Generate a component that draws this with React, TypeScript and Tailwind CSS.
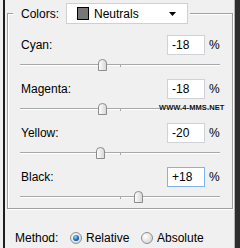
import React from "react";

const rows = [
  { label: "Cyan:", value: -18 },
  { label: "Magenta:", value: -18, mark: true },
  { label: "Yellow:", value: -20 },
  { label: "Black:", value: 18, focused: true },
];

const fmt = (v: number) => (v > 0 ? `+${v}` : `${v}`);

const Thumb = () => (
  <svg width="9" height="12" viewBox="0 0 9 12">
    <defs>
      <linearGradient id="thumbFill" x1="0" x2="1" y1="0" y2="0">
        <stop offset="0" stopColor="#ffffff" />
        <stop offset="1" stopColor="#d6d6d6" />
      </linearGradient>
    </defs>
    <path
      d="M0.5 11.5 V4 Q0.5 0.5 4.5 0.5 Q8.5 0.5 8.5 4 V11.5 Z"
      fill="url(#thumbFill)"
      stroke="#8c8c8c"
    />
  </svg>
);

const Radio = ({ checked }: { checked?: boolean }) => (
  <svg width="12" height="12" viewBox="0 0 12 12">
    <defs>
      <radialGradient id="radioBg" cx="0.35" cy="0.35" r="0.8">
        <stop offset="0" stopColor="#ffffff" />
        <stop offset="1" stopColor="#cfcfcf" />
      </radialGradient>
      <radialGradient id="radioDot" cx="0.4" cy="0.35" r="0.7">
        <stop offset="0" stopColor="#a6dcff" />
        <stop offset="0.5" stopColor="#2a87d6" />
        <stop offset="1" stopColor="#0d3f86" />
      </radialGradient>
    </defs>
    <circle cx="6" cy="6" r="5.5" fill="url(#radioBg)" stroke="#8e8f8f" />
    {checked && <circle cx="6" cy="6" r="3" fill="url(#radioDot)" />}
  </svg>
);

export default function App() {
  return (
    <div className="flex h-[248px] w-[240px] bg-[#f0f0f0] text-[12px] text-black font-['Liberation_Sans',Arial,sans-serif]">
      {/* left edge */}
      <div className="w-[3px]" />
      <div className="w-[2px] bg-[#1e1e1e]" />

      <div className="flex w-[229px] flex-col">
        <fieldset className="ml-[2px] mt-[3px] w-[226px] border border-[#a0a0a0] pb-[1px] pt-[11px] shadow-[inset_1px_1px_0_#fff,1px_1px_0_#fff]">
          <legend className="ml-[5px] flex items-center bg-[#f0f0f0] pl-[8px] pr-[2px]">
            <span className="w-[45px]">Colors:</span>
            <div className="flex h-[21px] w-[122px] items-center border border-[#d0d0d0] bg-white pl-[10px]">
              <span className="h-[13px] w-[12px] border border-black bg-[#777777]" />
              <span className="ml-[5px] flex-1 text-[12px]">Neutrals</span>
              <svg width="7" height="4" viewBox="0 0 7 4" className="mr-[11px]">
                <path d="M0 0 H7 L3.5 4 Z" fill="#000" />
              </svg>
            </div>
          </legend>

          <div className="flex flex-col gap-[4px]">
            {rows.map((r) => (
              <div key={r.label} className="flex flex-col">
                <div className="flex h-[20px] items-center">
                  <span className="ml-[13px] w-[146px]">{r.label}</span>
                  <div
                    className={`flex h-[20px] w-[38px] items-center border bg-white pl-[4px] ${
                      r.focused ? "border-[#7eb4ea]" : "border-[#cfd3d8]"
                    }`}
                  >
                    {fmt(r.value)}
                  </div>
                  <span className="ml-[4px]">%</span>
                </div>
                <div className="relative ml-[12px] h-[20px] w-[200px]">
                  <div className="absolute left-0 top-[9px] h-[2px] w-[200px] border-t border-[#a8a8a8] bg-white" />
                  <div className="absolute left-[100px] top-[9px] h-[3px] w-[1px] bg-[#a8a8a8]" />
                  <div className="absolute top-[4px]" style={{ left: 96 + r.value }}>
                    <Thumb />
                  </div>
                  {r.mark && (
                    <span className="absolute left-[139px] top-[5px] whitespace-nowrap text-[7.5px] font-bold leading-[8px] tracking-[0.1px] text-[#111] [text-shadow:0_0_1px_#fff]">
                      WWW.4-MMS.NET
                    </span>
                  )}
                </div>
              </div>
            ))}
          </div>
        </fieldset>

        <div className="mt-[19px] flex h-[20px] items-center pl-[10px]">
          <span className="w-[55px]">Method:</span>
          <div className="flex w-[71px] items-center">
            <Radio checked />
            <span className="ml-[4px]">Relative</span>
          </div>
          <div className="flex items-center">
            <Radio />
            <span className="ml-[4px]">Absolute</span>
          </div>
        </div>
      </div>

      {/* right edge */}
      <div className="w-[1px] bg-[#b4b4b4]" />
      <div className="w-[5px] bg-[#2e2e2e]" />
    </div>
  );
}
